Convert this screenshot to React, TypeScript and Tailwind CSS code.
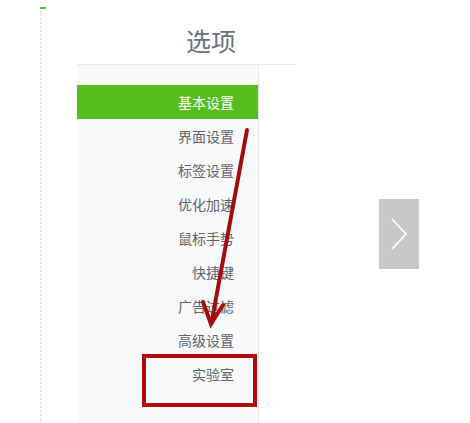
const menuItems = [
  "基本设置",
  "界面设置",
  "标签设置",
  "优化加速",
  "鼠标手势",
  "快捷键",
  "广告过滤",
  "高级设置",
  "实验室",
];

export default function App() {
  return (
    <div
      className="relative h-[423px] w-[470px] overflow-hidden bg-white"
      style={{ fontFamily: '"Noto Sans CJK SC", "Noto Sans", sans-serif' }}
    >
      <div className="flex h-full">
        {/* dotted guide on the left */}
        <div className="ml-[40px] flex h-full w-[6px] flex-col pt-[7px]">
          <div className="h-[2px] w-[6px] bg-[#5cc02a]" />
          <div className="mt-[2px] flex-1 border-l-2 border-dotted border-[#e0e0e0]" />
        </div>

        <div className="ml-[31px] flex w-[218px] flex-col">
          <div className="flex h-[65px] items-center justify-center border-b border-[#e8e8e8] pl-[50px] pt-[16px]">
            <span className="text-[25px] leading-none text-[#6b7079]">选项</span>
          </div>

          <nav className="flex w-[182px] flex-1 flex-col border-r border-[#e4e4e4] bg-[#f8f9fb] pt-[20px]">
            {menuItems.map((item, index) => (
              <div
                key={item}
                className={`flex h-[34px] items-center justify-end pr-[24px] text-[14px] ${
                  index === 0 ? "bg-[#55be1c] text-white" : "text-[#5f646b]"
                }`}
              >
                {item}
              </div>
            ))}
          </nav>
        </div>
      </div>

      {/* carousel next button */}
      <button
        type="button"
        className="absolute left-[379px] top-[199px] flex h-[70px] w-[40px] items-center justify-center bg-[#c8c8c8]"
        aria-label="Next"
      >
        <svg width="18" height="34" viewBox="0 0 18 34">
          <polyline points="2,2 16,17 2,32" fill="none" stroke="#fff" strokeWidth="1.8" />
        </svg>
      </button>

      {/* annotation arrow */}
      <svg
        className="pointer-events-none absolute left-0 top-0"
        width="470"
        height="423"
        viewBox="0 0 470 423"
      >
        <line x1="247" y1="130" x2="212" y2="320" stroke="#a30c0c" strokeWidth="4" strokeLinecap="round" />
        <polyline
          points="203,302 211,324 223,305"
          fill="none"
          stroke="#a30c0c"
          strokeWidth="4"
          strokeLinecap="round"
          strokeLinejoin="miter"
        />
      </svg>

      {/* annotation box */}
      <div className="pointer-events-none absolute left-[142px] top-[354px] h-[53px] w-[115px] border-[4px] border-[#b00a0a]" />
    </div>
  );
}
